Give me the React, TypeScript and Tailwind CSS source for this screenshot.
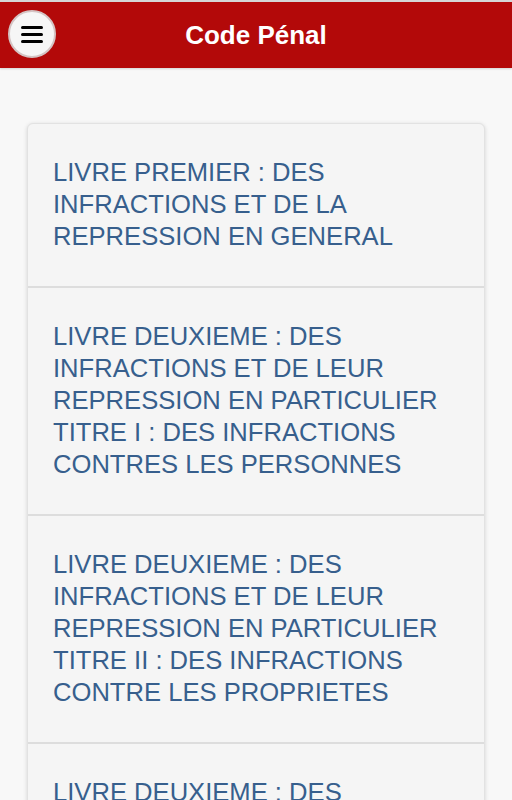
const chapters = [
  "LIVRE PREMIER : DES INFRACTIONS ET DE LA REPRESSION EN GENERAL",
  "LIVRE DEUXIEME : DES INFRACTIONS ET DE LEUR REPRESSION EN PARTICULIER TITRE I : DES INFRACTIONS CONTRES LES PERSONNES",
  "LIVRE DEUXIEME : DES INFRACTIONS ET DE LEUR REPRESSION EN PARTICULIER TITRE II : DES INFRACTIONS CONTRE LES PROPRIETES",
  "LIVRE DEUXIEME : DES INFRACTIONS ET DE LEUR REPRESSION EN PARTICULIER TITRE III : DES INFRACTIONS CONTRE LA CHOSE PUBLIQUE",
];

export default function App() {
  return (
    <div className="min-h-screen bg-[#f8f8f8] font-['Liberation_Sans',Arial,sans-serif]">
      <header className="relative flex h-[68px] items-center justify-center border-t-2 border-[#d6d6d6] bg-[#b30909] shadow-[0_1px_2px_rgba(0,0,0,0.15)]">
        <button
          type="button"
          className="absolute left-[8px] top-[8px] flex h-[48px] w-[48px] items-center justify-center rounded-full border-2 border-[#d4c4c4] bg-[#f6f6f6]"
        >
          <span className="flex w-[22px] flex-col gap-[4px]">
            <span className="h-[3px] rounded-sm bg-black" />
            <span className="h-[3px] rounded-sm bg-black" />
            <span className="h-[3px] rounded-sm bg-black" />
          </span>
        </button>
        <h1 className="text-[26px] font-bold text-white">Code Pénal</h1>
      </header>

      <main className="px-[27px] pt-[55px]">
        <ul className="overflow-hidden rounded-md border border-[#e2e2e2] bg-[#f5f5f5] shadow-[0_1px_4px_rgba(0,0,0,0.15)]">
          {chapters.map((title, i) => (
            <li
              key={i}
              className={`px-[25px] pb-[34px] pt-[32px] ${i > 0 ? "border-t-2 border-[#dddddd]" : ""}`}
            >
              <p className="text-[25.6px] leading-[32px] text-[#375f8d]">{title}</p>
            </li>
          ))}
        </ul>
      </main>
    </div>
  );
}
